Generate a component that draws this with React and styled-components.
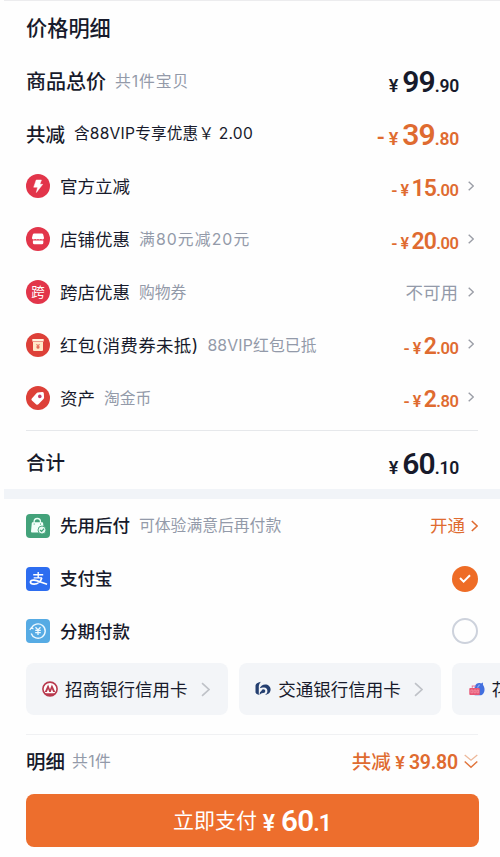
import React from "react";
import styled, { createGlobalStyle } from "styled-components";

const GlobalStyle = createGlobalStyle`
  * {
    box-sizing: border-box;
  }

  body {
    margin: 0;
    background: #fefefe;
    color: #171a2b;
    font-family: Inter, "Noto Sans CJK SC", sans-serif;
    overflow: hidden;
  }
`;

const Page = styled.main`
  width: 500px;
  height: 857px;
  overflow: hidden;
`;

const TopEdge = styled.div`
  height: 1px;
  margin-left: 4px;
  background: #ececee;
`;

const Section = styled.section`
  padding: ${({ $top }) => $top || 0}px 22px 0 26px;
`;

const Row = styled.div`
  display: flex;
  align-items: center;
  height: ${({ $height }) => $height || 52.85}px;
`;

const Text = styled.span`
  flex: none;
  margin-left: ${({ $left }) => $left || 0}px;
  padding-top: ${({ $drop = 2 }) => $drop}px;
  color: ${({ $color }) => $color || "#171a2b"};
  font-size: ${({ $size }) => $size || 17.5}px;
  font-weight: ${({ $weight }) => $weight || 400};
  letter-spacing: ${({ $spacing }) => $spacing || 0}px;
  line-height: 26px;
  white-space: pre;
`;

const Note = styled(Text)`
  color: ${({ $color }) => $color || "#939aa9"};
  font-size: ${({ $size }) => $size || 15.8}px;
`;

const End = styled.div`
  display: flex;
  align-items: center;
  margin-left: auto;
`;

const IconSlot = styled.span`
  display: flex;
  flex: none;
  width: ${({ $size }) => $size || 24}px;
  margin: 0 ${({ $gap }) => $gap || 10}px 0 0;

  svg {
    display: block;
    width: 100%;
    overflow: visible;
  }
`;

const Money = styled.span`
  display: flex;
  align-items: baseline;
  margin-right: ${({ $right }) => $right || 0}px;
  padding-top: ${({ $drop }) => $drop || 0}px;
  color: ${({ $color }) => $color || "#171a2b"};
  font-family: Roboto, "Noto Sans CJK SC", sans-serif;
  font-weight: 600;
  line-height: 30px;
  white-space: pre;
`;

const Sign = styled.span`
  margin-right: ${({ $gap }) => $gap || 4}px;
  font-size: ${({ $size }) => $size}px;
`;

const Whole = styled.span`
  font-size: ${({ $size }) => $size}px;
  letter-spacing: ${({ $spacing }) => $spacing || 0}px;
`;

const Cents = styled.span`
  font-size: ${({ $size }) => $size}px;
  letter-spacing: ${({ $spacing }) => $spacing || 0}px;
`;

const ChevronSlot = styled.span`
  display: flex;
  margin: 0 4px 1px ${({ $left }) => $left}px;
`;

const Divider = styled.hr`
  height: 1px;
  margin: 0;
  border: 0;
  background: ${({ $color }) => $color || "#e6e8eb"};
`;

const Band = styled.div`
  height: 10px;
  margin-left: 4px;
  background: #f1f4f8;
`;

const Radio = styled.span`
  display: flex;
  align-items: center;
  justify-content: center;
  width: 26px;
  height: 26px;
  border: ${({ $checked }) => ($checked ? "0" : "2px solid #cdd2dc")};
  border-radius: 50%;
  background: ${({ $checked }) => ($checked ? "#ee6c26" : "transparent")};
`;

const Cards = styled.div`
  display: flex;
  gap: 11px;
  padding: 5.4px 0 0 25.5px;
  overflow: hidden;
`;

const Card = styled.div`
  display: flex;
  flex: none;
  align-items: center;
  width: 202.3px;
  height: 52px;
  padding: 0 18px 0 16.5px;
  border-radius: 8px;
  background: #f3f5f8;
`;

const PayButton = styled.button`
  display: flex;
  align-items: center;
  justify-content: center;
  width: 453px;
  height: 53px;
  margin: 7px 0 0 -0.5px;
  padding: 0;
  border: 0;
  border-radius: 8px;
  background: #ed6e2d;
  font-family: inherit;
`;

const Chevron = ({ color = "#9a9da6", width = 6, height = 10, stroke = 1.4 }) => (
  <svg width={width} height={height} viewBox="0 0 6 10" fill="none">
    <path d="M.7.7 5.3 5 .7 9.3" stroke={color} strokeWidth={stroke} />
  </svg>
);

const DoubleChevron = () => (
  <svg width="14" height="15" viewBox="0 0 14 15" fill="none">
    <path d="m.7 1 6.3 5.2L13.3 1" stroke="#edb89a" strokeWidth="1.3" />
    <path d="m.7 7.5 6.3 5.8 6.3-5.8" stroke="#e1773f" strokeWidth="1.5" />
  </svg>
);

const FlashIcon = () => (
  <svg viewBox="0 0 24 24">
    <circle cx="12" cy="12" r="12" fill="#e2354a" />
    <path d="M10.2 6h5.2l-1.5 4.3h2.8l-6.3 8.2 1.2-5.3H7.7z" fill="#fff" stroke="#fff" strokeWidth=".5" strokeLinejoin="round" />
  </svg>
);

const ShopIcon = () => (
  <svg viewBox="0 0 24 24">
    <circle cx="12" cy="12" r="12" fill="#e2354a" />
    <path d="M8.1 6.6h7.8q1 0 1.3 1l.8 3.1q.2 1.7-1.4 1.7-1.2 0-1.8-.3-.7.3-1.5.3t-1.3-.3q-.6.3-1.4.3t-1.4-.3q-.6.3-1.8.3-1.6 0-1.4-1.7l.8-3.1q.3-1 1.3-1z" fill="#fff" />
    <path d="M6.9 13.5h10.4v2.3q0 1.5-1.5 1.5H8.4q-1.5 0-1.5-1.5z" fill="#fff" />
  </svg>
);

const CrossIcon = () => (
  <svg viewBox="0 0 24 24">
    <circle cx="12" cy="12" r="12" fill="#e2354a" />
    <text x="12" y="17" fill="#fff" fontSize="13.5" textAnchor="middle">跨</text>
  </svg>
);

const PacketIcon = () => (
  <svg viewBox="0 0 24 24">
    <circle cx="12" cy="12" r="12" fill="#dd4038" />
    <path d="M6.3 6h11.4v2.5H6.3z" fill="#fff3df" />
    <path d="M7 9h10v8.1q0 1-1 1H8q-1 0-1-1z" fill="#ffe9c9" />
    <path d="m10.5 11 1.5 1.8 1.5-1.8M10.4 13.2h3.2M10.4 14.7h3.2M12 13v3" fill="none" stroke="#da4a3b" strokeWidth=".8" />
  </svg>
);

const TagIcon = () => (
  <svg viewBox="0 0 24 24">
    <circle cx="12" cy="12" r="12" fill="#dd4038" />
    <path d="M11.7 6.6 16.2 6q1.4-.1 1.6 1.3l.3 4.1q0 .8-.6 1.5l-5.1 5.4q-1 .9-2.1.1l-4.4-3.9q-1-1-.1-2.1l4.7-5.2q.5-.5 1.2-.6z" fill="#fff" />
    <circle cx="13.8" cy="10.4" r="1.8" fill="#c6406b" />
  </svg>
);

const BagIcon = () => (
  <svg viewBox="0 0 24 24">
    <rect width="24" height="24" rx="4" fill="#43a27a" />
    <path d="M8.1 9V7.7a3.2 3.2 0 0 1 6.4 0V9" fill="none" stroke="#eafff5" strokeWidth="1.3" />
    <path d="M6.6 8.2h9.6q.8 0 .9.8l.9 9.5H6q-1.1 0-1-1l.8-8.5q.1-.8.8-.8z" fill="#f2fff9" />
    <path d="M8.2 9.5v1.1M14.5 9.5v1.1" stroke="#43a27a" />
    <circle cx="16" cy="16" r="4" fill="#e8faf2" stroke="#43a27a" strokeWidth=".9" />
    <path d="m14.1 16 1.5 1.4 2.5-2.7" fill="none" stroke="#43a27a" strokeWidth="1.2" />
  </svg>
);

const AlipayIcon = () => (
  <svg viewBox="0 0 24 24">
    <rect width="24" height="24" rx="4" fill="#2d6df0" />
    <g fill="none" stroke="#fff">
      <path d="M7.2 7.8h10M12.2 5v6M7.7 10.9h8.4" strokeWidth="1.4" />
      <path d="M15.8 10.9c-1 3.1-3.9 6.3-7.7 6.3-2.4 0-3.7-.8-3.7-2.1 0-1.4 1.6-2.2 3.6-2 4.1.4 7.1 2.6 13.1 4.2" strokeWidth="1.7" />
    </g>
  </svg>
);

const InstallmentIcon = () => (
  <svg viewBox="0 0 24 24">
    <rect width="24" height="24" rx="4" fill="#56abe4" />
    <g fill="none" stroke="#eef9ff">
      <path d="M5.4 9.2a7.2 7.2 0 1 1-.2 5.2" strokeWidth="1.4" />
      <path d="m3.8 10.8 1.5-2 2.2 1.3" strokeWidth="1.2" />
      <path d="m9.5 8.2 2.5 2.7 2.5-2.7M12 11v5M9.2 11.4h5.6M9.2 13.6h5.6" strokeWidth="1.3" />
    </g>
  </svg>
);

const MerchantsIcon = () => (
  <svg viewBox="0 0 16 16">
    <ellipse cx="8" cy="8" rx="7.1" ry="6.9" fill="#fff" stroke="#b93a4e" strokeWidth="1.6" />
    <path d="M6.1 3.4 2.7 11h2.2l1.2-3 1.1 3h1.6l1.1-3 1.2 3h2.2L9.9 3.4 8 8.2z" fill="#b93a4e" />
    <path d="M2 12.2h12A7 7 0 0 1 8 15a7 7 0 0 1-6-2.8z" fill="#b93a4e" />
  </svg>
);

const CommunicationsIcon = () => (
  <svg viewBox="0 0 16 16">
    <path d="M5.8.8Q.8 2 .5 4.4v7.2q.1 1.5 3.3 2.3V5q0-1.6 2-4.2z" fill="#243f70" />
    <path d="M4.7 7.2Q6.3 3.4 10.2 3.4c3 0 5.4 2.1 5.4 5 0 3-2.2 5.1-5.7 5.4 1.7-.9 2.5-2.2 2.5-3.9 0-2-1.4-3.4-3.2-3.4-2.1 0-3.2.2-4.5.7z" fill="#243f70" />
    <circle cx="8.4" cy="10.1" r="1.9" fill="#243f70" />
    <path d="M4.5 13.9q-.1-3 2.1-4.1l1.7 2.2q-2.2-.2-3.8 1.9z" fill="#243f70" />
  </svg>
);

const HuabeiIcon = () => (
  <svg viewBox="0 0 17 16">
    <path d="M6 4.7C7.4 1.4 10.5.3 12.8 1.6l2-1.1v2.3c3.5 4.5 1.5 11.4-3.6 11.4H6z" fill="#426fdf" />
    <path d="m9 6 2.2-3.2" stroke="#8aa8f0" strokeWidth="1.3" />
    <rect x=".3" y="6.4" width="11.2" height="7.4" rx="1" fill="#e75776" />
    <path d="M2 8.5h2v3H2zm3.3 0h2v3h-2zm3.2 0h1.7v3H8.5z" fill="none" stroke="#f9a9b8" strokeWidth=".6" />
    <path d="M3.5 6V4.2h4" fill="none" stroke="#e8799a" strokeWidth="1.2" />
  </svg>
);

const ORANGE = "#df6b30";

const discounts = [
  { label: "官方立减", icon: FlashIcon, whole: "15" },
  { label: "店铺优惠", note: "满80元减20元", icon: ShopIcon, whole: "20", noteSpacing: 1.1 },
  { label: "跨店优惠", note: "购物券", icon: CrossIcon },
  { label: "红包(消费券未抵)", note: "88VIP红包已抵", icon: PacketIcon, whole: "2", labelSpacing: 0.35, noteSpacing: 0.15 },
  { label: "资产", note: "淘金币", icon: TagIcon, whole: "2", cents: ".80" },
];

const cards = [
  { name: "招商银行信用卡", icon: MerchantsIcon },
  { name: "交通银行信用卡", icon: CommunicationsIcon },
  { name: "花", icon: HuabeiIcon },
];

const Amount = ({ whole, cents, minus, small, drop }) => (
  <Money $color={minus ? ORANGE : undefined} $right={19} $drop={drop || (small ? 7 : 7)}>
    {minus && <Sign $size={small ? 17 : 22} $gap={small ? 3 : 4}>-</Sign>}
    <Sign $size={small ? 16 : 18} $gap={small ? 2.5 : 4}>¥</Sign>
    <Whole $size={small ? 23 : 30} $spacing={small ? -0.8 : -1}>{whole}</Whole>
    <Cents $size={small ? 16.5 : 17.5} $spacing={small ? -0.4 : -0.2}>{cents}</Cents>
  </Money>
);

const DiscountRow = ({ label, note, icon: Icon, whole, cents = ".00", labelSpacing, noteSpacing }) => (
  <Row>
    <IconSlot><Icon /></IconSlot>
    <Text $spacing={labelSpacing}>{label}</Text>
    {note && <Note $left={9} $spacing={noteSpacing}>{note}</Note>}
    <End>
      {whole ? <Amount minus small whole={whole} cents={cents} /> : <Note $size={17.5}>不可用</Note>}
      <ChevronSlot $left={whole ? -9.5 : 10}><Chevron /></ChevronSlot>
    </End>
  </Row>
);

const App = () => (
  <Page>
    <GlobalStyle />
    <TopEdge />
    <Section $top={0.5}>
      <Row><Text $size={21.2} $weight={500} $drop={0}>价格明细</Text></Row>
      <Row>
        <Text $size={20} $weight={500}>商品总价</Text>
        <Note $left={9} $spacing={0.9}>共1件宝贝</Note>
        <End><Amount whole="99" cents=".90" /></End>
      </Row>
      <Row>
        <Text $size={19.5} $weight={500}>共减</Text>
        <Text $left={9} $size={15.6} $spacing={0.22} $drop={1}>含88VIP专享优惠￥ 2.00</Text>
        <End><Amount minus whole="39" cents=".80" /></End>
      </Row>
      {discounts.map((discount) => (
        <DiscountRow key={discount.label} {...discount} />
      ))}
      <Row $height={5.7} />
      <Divider />
      <Row $height={58.3}>
        <Text $size={19.5} $weight={500} $drop={5}>合计</Text>
        <End><Amount whole="60" cents=".10" drop={12} /></End>
      </Row>
    </Section>
    <Band />
    <Section>
      <Row>
        <IconSlot><BagIcon /></IconSlot>
        <Text $weight={500} $drop={0}>先用后付</Text>
        <Note $left={9} $drop={0}>可体验满意后再付款</Note>
        <End>
          <Text $color={ORANGE} $drop={0}>开通</Text>
          <Text $left={6} $drop={0}><Chevron color={ORANGE} height={12} width={7} /></Text>
        </End>
      </Row>
      <Row>
        <IconSlot><AlipayIcon /></IconSlot>
        <Text $weight={500} $drop={0}>支付宝</Text>
        <End>
          <Radio $checked>
            <svg width="12" height="9" viewBox="0 0 12 9" fill="none">
              <path d="m1 4 3.6 3.6L11 1.2" stroke="#fff" strokeWidth="2" />
            </svg>
          </Radio>
        </End>
      </Row>
      <Row>
        <IconSlot><InstallmentIcon /></IconSlot>
        <Text $weight={500} $drop={1}>分期付款</Text>
        <End><Radio /></End>
      </Row>
    </Section>
    <Cards>
      {cards.map(({ name, icon: Icon }) => (
        <Card key={name}>
          <IconSlot $size={16} $gap={7}><Icon /></IconSlot>
          <Text $drop={2}>{name}</Text>
          <End><Chevron color="#bfc2c8" width={9} height={15} stroke={1.1} /></End>
        </Card>
      ))}
    </Cards>
    <Section $top={19}>
      <Divider $color="#f0f1f3" />
      <Row $height={52}>
        <Text $size={19.5} $weight={500}>明细</Text>
        <Note $left={7} $spacing={0.4}>共1件</Note>
        <End>
          <Text $size={19.5} $weight={500} $color={ORANGE}>共减</Text>
          <Money $color={ORANGE} $right={6} $drop={3}>
            <Sign $size={18}> ¥</Sign>
            <Whole $size={19.5} $spacing={-0.2}>39.80</Whole>
          </Money>
          <DoubleChevron />
        </End>
      </Row>
      <PayButton type="button">
        <Text $size={21} $color="#fff" $drop={0}>立即支付</Text>
        <Money $color="#fff" $drop={3}>
          <Sign $size={23} $gap={6}> ¥</Sign>
          <Whole $size={29.5} $spacing={-0.8}>60</Whole>
          <Cents $size={23} $spacing={-1}>.1</Cents>
        </Money>
      </PayButton>
    </Section>
  </Page>
);

export default App;
